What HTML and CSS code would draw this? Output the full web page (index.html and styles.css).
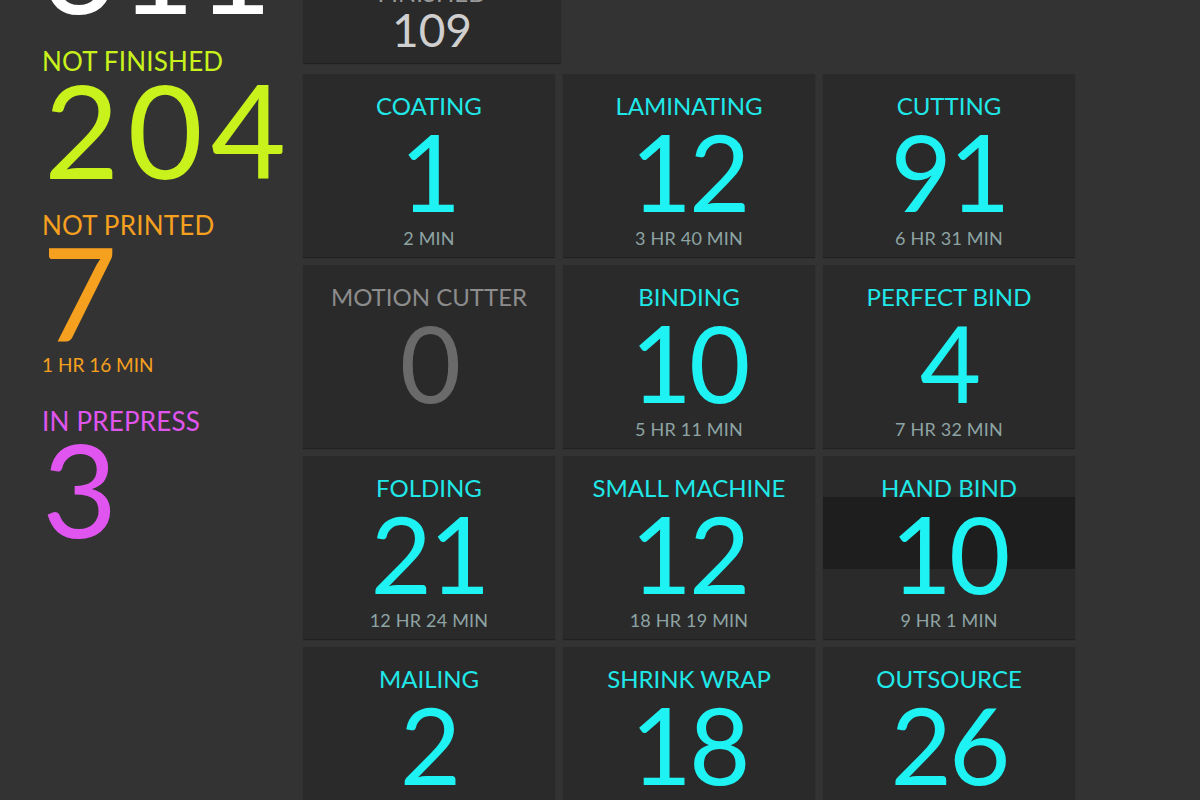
FILE: index.html
```html
<!DOCTYPE html>
<html lang="en">
<head>
    <meta charset="UTF-8">
    <meta name="viewport" content="width=device-width, initial-scale=1.0">
    <title>Production Board</title>
    <link rel="stylesheet" href="styles.css">
</head>
<body>
    <div class="board">
        <div class="summary">
            <div class="big total">311</div>

            <div class="label not-finished">NOT FINISHED</div>
            <div class="big not-finished num-204">204</div>

            <div class="label not-printed">NOT PRINTED</div>
            <div class="big not-printed num-7">7</div>
            <div class="time not-printed">1 HR 16 MIN</div>

            <div class="label prepress">IN PREPRESS</div>
            <div class="big prepress num-3">3</div>
        </div>

        <div class="stations">
            <div class="finished-tile">
                <div class="tile-label">FINISHED</div>
                <div class="finished-count">109</div>
            </div>

            <div class="grid">
                <div class="tile">
                    <div class="tile-label">COATING</div>
                    <div class="tile-count">1</div>
                    <div class="tile-time">2 MIN</div>
                </div>
                <div class="tile">
                    <div class="tile-label">LAMINATING</div>
                    <div class="tile-count">12</div>
                    <div class="tile-time">3 HR 40 MIN</div>
                </div>
                <div class="tile">
                    <div class="tile-label">CUTTING</div>
                    <div class="tile-count">91</div>
                    <div class="tile-time">6 HR 31 MIN</div>
                </div>

                <div class="tile idle">
                    <div class="tile-label">MOTION CUTTER</div>
                    <div class="tile-count">0</div>
                    <div class="tile-time">&nbsp;</div>
                </div>
                <div class="tile">
                    <div class="tile-label">BINDING</div>
                    <div class="tile-count">10</div>
                    <div class="tile-time">5 HR 11 MIN</div>
                </div>
                <div class="tile">
                    <div class="tile-label">PERFECT BIND</div>
                    <div class="tile-count">4</div>
                    <div class="tile-time">7 HR 32 MIN</div>
                </div>

                <div class="tile">
                    <div class="tile-label">FOLDING</div>
                    <div class="tile-count">21</div>
                    <div class="tile-time">12 HR 24 MIN</div>
                </div>
                <div class="tile">
                    <div class="tile-label">SMALL MACHINE</div>
                    <div class="tile-count">12</div>
                    <div class="tile-time">18 HR 19 MIN</div>
                </div>
                <div class="tile pressed">
                    <div class="tile-label">HAND BIND</div>
                    <div class="tile-count">10</div>
                    <div class="tile-time">9 HR 1 MIN</div>
                </div>

                <div class="tile">
                    <div class="tile-label">MAILING</div>
                    <div class="tile-count">2</div>
                    <div class="tile-time">&nbsp;</div>
                </div>
                <div class="tile">
                    <div class="tile-label">SHRINK WRAP</div>
                    <div class="tile-count">18</div>
                    <div class="tile-time">&nbsp;</div>
                </div>
                <div class="tile">
                    <div class="tile-label">OUTSOURCE</div>
                    <div class="tile-count">26</div>
                    <div class="tile-time">&nbsp;</div>
                </div>
            </div>
        </div>
    </div>
</body>
</html>
```

FILE: styles.css
```css
html, body {
    height: 100%;
}
body {
    margin: 0;
    background-color: #333333;
    font-family: Lato, "Noto Sans", sans-serif;
    overflow: hidden;
}
.board {
    display: flex;
    align-items: flex-start;
}

/* left summary column */
.summary {
    width: 261px;
    padding-left: 42px;
    flex-shrink: 0;
}
.big {
    font-size: 130px;
    line-height: 0.78;
    letter-spacing: 2px;
}
.label {
    font-size: 26px;
    line-height: 0.8;
    letter-spacing: 0.2px;
}
.time {
    font-size: 19px;
    line-height: 0.8;
}
.total {
    color: #ffffff;
    margin-top: -86px;
}
.not-finished {
    color: #c9f21c;
}
.not-printed {
    color: #f6a01f;
}
.prepress {
    color: #e055f0;
}
.summary .label.not-finished {
    margin-top: 36px;
}
.num-204 {
    margin-top: 7px;
    margin-left: 2px;
    letter-spacing: 8px;
}
.summary .label.not-printed {
    margin-top: 34px;
}
.num-7 {
    margin-top: 7px;
}
.time.not-printed {
    margin-top: 13px;
}
.summary .label.prepress {
    margin-top: 39px;
}
.num-3 {
    margin-top: 6px;
}

/* station tiles */
.stations {
    width: 774px;
    margin-top: -120px;
}
.finished-tile {
    width: 258px;
    height: 183px;
    box-sizing: border-box;
    padding-top: 103px;
    background-color: #2a2a2a;
    text-align: center;
    box-shadow: 0 1px 1px rgba(0, 0, 0, 0.35);
}
.finished-tile .tile-label {
    color: #9a9a9a;
}
.finished-count {
    font-size: 46px;
    line-height: 0.8;
    margin-top: 10px;
    color: #cfcfcf;
}
.grid {
    display: grid;
    grid-template-columns: repeat(3, 252px);
    grid-auto-rows: 183px;
    column-gap: 8px;
    row-gap: 8px;
    margin-top: 11px;
}
.tile {
    position: relative;
    background-color: #2a2a2a;
    text-align: center;
    padding-top: 22px;
    box-sizing: border-box;
    box-shadow: 0 1px 1px rgba(0, 0, 0, 0.35);
}
.tile > div {
    position: relative;
    z-index: 1;
}
.tile-label {
    font-size: 24px;
    line-height: 0.8;
    color: #20e8e8;
}
.tile-count {
    font-size: 106px;
    line-height: 0.78;
    margin-top: 15px;
    letter-spacing: -3px;
    color: #1ff2f2;
}
.tile-time {
    font-size: 18px;
    line-height: 0.8;
    margin-top: 18px;
    color: #8ea4a4;
    letter-spacing: 0.2px;
}
.tile.idle .tile-label {
    color: #8c8c8c;
}
.tile.idle .tile-count {
    color: #6a6a6a;
}
.tile.pressed::before {
    content: "";
    position: absolute;
    left: 0;
    right: 0;
    top: 41px;
    height: 72px;
    background-color: #1e1e1e;
}
```
